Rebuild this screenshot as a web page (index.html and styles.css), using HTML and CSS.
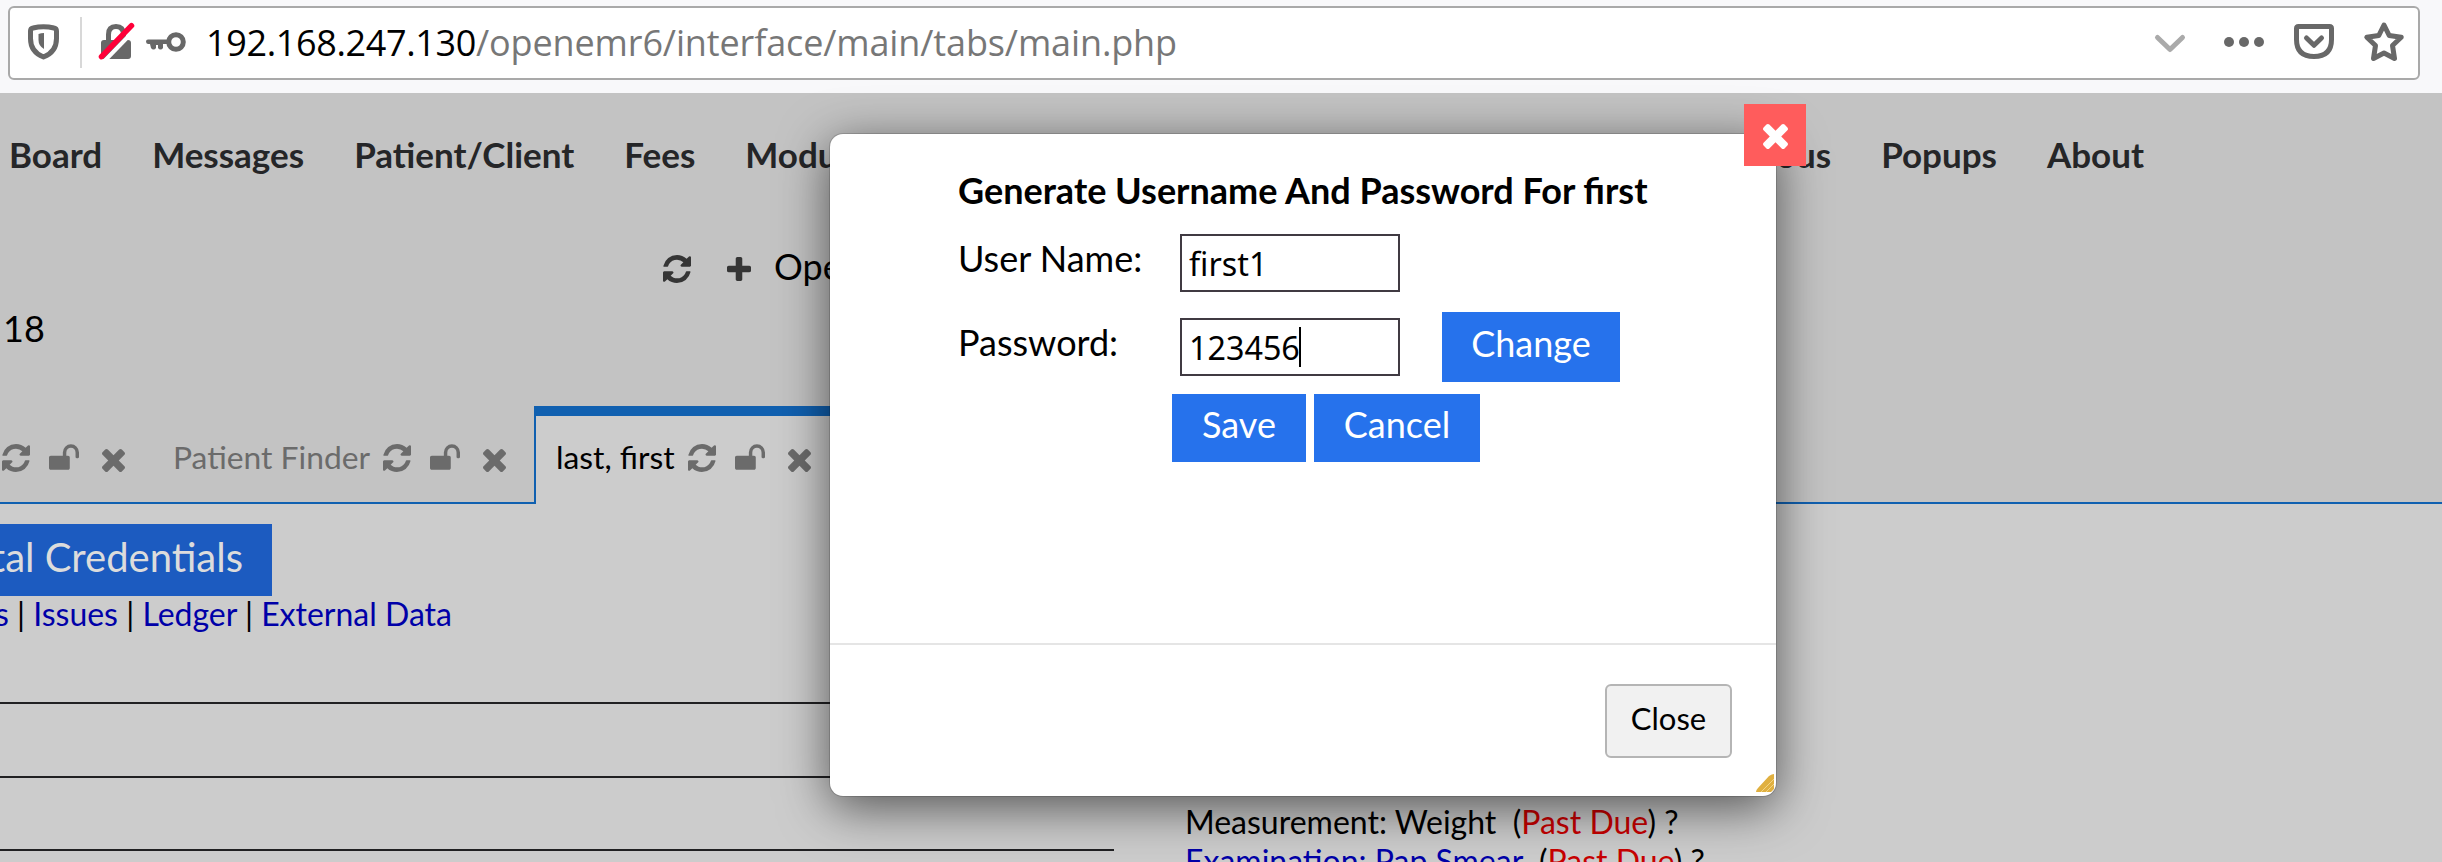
FILE: index.html
```
<!DOCTYPE html>
<html lang="en">
<head>
<meta charset="utf-8">
<title>OpenEMR</title>
<link rel="stylesheet" href="styles.css">
</head>
<body>
<svg class="defs" aria-hidden="true">
  <symbol id="refresh" viewBox="0 0 1536 1536"><path d="M1511 928q0 5-1 7-64 268-268 434.500t-478 166.500q-146 0-282.500-55t-243.500-157l-129 129q-19 19-45 19t-45-19-19-45v-448q0-26 19-45t45-19h448q26 0 45 19t19 45-19 45l-137 137q71 66 161 102t187 36q134 0 250-65t186-179q11-17 53-117 8-23 30-23h192q13 0 22.500 9.500t9.500 22.500zm25-800v448q0 26-19 45t-45 19h-448q-26 0-45-19t-19-45 19-45l138-138q-148-137-349-137-134 0-250 65t-186 179q-11 17-53 117-8 23-30 23h-199q-13 0-22.500-9.500t-9.500-22.500v-7q65-268 270-434.500t480-166.500q146 0 284 55.500t245 156.500l130-129q19-19 45-19t45 19 19 45z"/></symbol>
  <symbol id="unlock" viewBox="64 128 1664 1408"><path d="M1728 576v256q0 26-19 45t-45 19h-64q-26 0-45-19t-19-45v-256q0-106-75-181t-181-75-181 75-75 181v192h96q40 0 68 28t28 68v576q0 40-28 68t-68 28h-960q-40 0-68-28t-28-68v-576q0-40 28-68t68-28h672v-192q0-185 131.500-316.500t316.500-131.500 316.500 131.500 131.500 316.500z"/></symbol>
  <symbol id="times" viewBox="302 366 1188 1188"><path d="M1490 1322q0 40-28 68l-136 136q-28 28-68 28t-68-28l-294-294-294 294q-28 28-68 28t-68-28l-136-136q-28-28-28-68t28-68l294-294-294-294q-28-28-28-68t28-68l136-136q28-28 68-28t68 28l294 294 294-294q28-28 68-28t68 28l136 136q28 28 28 68t-28 68l-294 294 294 294q28 28 28 68z"/></symbol>
  <symbol id="plus" viewBox="192 128 1408 1408"><path d="M1600 736v192q0 40-28 68t-68 28h-416v416q0 40-28 68t-68 28h-192q-40 0-68-28t-28-68v-416h-416q-40 0-68-28t-28-68v-192q0-40 28-68t68-28h416v-416q0-40 28-68t68-28h192q40 0 68 28t28 68v416h416q40 0 68 28t28 68z"/></symbol>
</svg>

<header class="toolbar">
  <div class="urlbar">
    <svg class="url-icons" viewBox="0 0 190 70">
      <path class="line" d="M23 20q10.500-2.500 21 0q2.500.5 2.500 3v7.500q0 13.500-13 18.500Q20.500 44 20.500 30.500V23q0-2.500 2.500-3z"/>
      <path class="fill" d="M34 25v16q-5.500-3-5.500-9v-6q2.500-1 5.500-1z"/>
      <path class="rule" d="M71 9v51"/>
      <path class="line" d="M98.500 33v-6.500q0-8 7.500-8t7.500 8V33"/>
      <path class="fill" d="M94 32h24q3 0 3 3v13q0 3-3 3H94q-3 0-3-3V35q0-3 3-3z"/>
      <path class="gap" d="M95 52.500l30-31"/>
      <path class="slash" d="M91.500 48.700l30-31"/>
      <circle class="line" cx="166" cy="34" r="7.300"/>
      <path class="fill" d="M138 31.500h21v4.500h-6v4q-1 1.500-2.500 1.500t-2.500-1.500v-3h-2v3q-1 1.500-2.500 1.500t-2.500-1.500l-1-4h-2q-2-.5-2-2.500t2-2z"/>
    </svg>
    <div class="url"><span class="host">192.168.247.130</span><span class="path">/openemr6/interface/main/tabs/main.php</span></div>
    <svg class="url-actions" viewBox="0 0 270 70">
      <path class="chev" d="M9.500 29.500l12.500 12 12.500-12"/>
      <circle class="fill" cx="81" cy="34" r="5"/><circle class="fill" cx="96" cy="34" r="5"/><circle class="fill" cx="111" cy="34" r="5"/>
      <path class="line" d="M150.500 18.500h31q2 0 2 2v11q0 17-17.500 17t-17.500-17v-11q0-2 2-2z"/>
      <path class="line" d="M158.500 30l7.500 7.300 7.500-7.300"/>
      <path class="line" d="M236 17l5.200 10.500 12 1.800-8.700 8.200 2 13-10.500-5.500-10.500 5.500 2-13-8.700-8.200 12-1.800z"/>
    </svg>
  </div>
</header>

<main class="app">
  <nav class="menu">
    <span>Board</span><span>Messages</span><span>Patient/Client</span><span>Fees</span><span>Modules</span>
    <span class="tail">Miscellaneous</span><span>Popups</span><span>About</span>
  </nav>
  <div class="patient-bar">
    <svg class="dark i-refresh"><use href="#refresh"/></svg>
    <svg class="dark i-plus"><use href="#plus"/></svg>
    <span>Open</span>
  </div>
  <div class="age">18</div>
  <div class="tabs">
    <div class="tab first">
      <svg class="i-refresh"><use href="#refresh"/></svg><svg class="i-lock"><use href="#unlock"/></svg><svg class="i-times"><use href="#times"/></svg>
    </div>
    <div class="tab finder"><span>Patient Finder</span>
      <svg class="i-refresh"><use href="#refresh"/></svg><svg class="i-lock"><use href="#unlock"/></svg><svg class="i-times"><use href="#times"/></svg>
    </div>
    <div class="tab active"><span>last, first</span>
      <svg class="i-refresh"><use href="#refresh"/></svg><svg class="i-lock"><use href="#unlock"/></svg><svg class="i-times"><use href="#times"/></svg>
    </div>
    <div class="tab-rest"></div>
  </div>
  <section class="content">
    <div class="cred"><span>tal Credentials</span></div>
    <div class="links"><span><a>s</a> | <a>Issues</a> | <a>Ledger</a> | <a>External Data</a></span></div>
    <div class="columns">
      <div class="cards"><div></div><div></div><div></div></div>
      <div class="reminders">
        <p>Measurement: Weight&nbsp; (<em>Past Due</em>) ?</p>
        <p><a>Examination: Pap Smear</a>&nbsp; (<em>Past Due</em>) ?</p>
      </div>
    </div>
  </section>
</main>

<div class="modal">
  <button class="modal-x"><svg><use href="#times"/></svg></button>
  <div class="modal-body">
    <h1>Generate Username And Password For first</h1>
    <div class="row"><label>User Name:</label><div class="field">first1</div></div>
    <div class="row"><label>Password:</label><div class="field">123456<i class="caret"></i></div><button class="btn change">Change</button></div>
    <div class="actions"><button class="btn save">Save</button><button class="btn cancel">Cancel</button></div>
  </div>
  <div class="modal-foot"><button class="close">Close</button></div>
  <svg class="grip" viewBox="0 0 18 18"><path d="M0 18q0-2 2-4L13 2q3-2 5-2v15l-3 3z"/><path class="grip-lines" d="M5 18L18 5M10 18l8-8"/></svg>
</div>
</body>
</html>
```
FILE: styles.css
```
* { box-sizing: border-box; }
body {
  margin: 0; width: 2442px; height: 862px; overflow: hidden; position: relative;
  font-family: Lato, "Liberation Sans", sans-serif; color: #000; background: #ccc;
}
button { font: inherit; border: 0; padding: 0; }
svg { display: block; flex: none; fill: currentColor; }
.defs { position: absolute; width: 0; height: 0; }

/* Browser toolbar */
.toolbar { height: 93px; background: #f8f8fa; padding: 6px 22px 0 8px; }
.urlbar {
  height: 74px; border: 2px solid #a9a9a9; border-radius: 6px; background: #fff;
  display: flex; align-items: center;
}
.url-icons { width: 190px; height: 70px; }
.url-actions { width: 270px; height: 70px; }
.line { fill: none; stroke: #686868; stroke-width: 5; stroke-linejoin: round; stroke-linecap: round; }
.fill { fill: #686868; }
.rule { stroke: #d8d8d8; stroke-width: 2; }
.gap { stroke: #fff; stroke-width: 4; }
.slash { stroke: #ff0039; stroke-width: 5.500; stroke-linecap: round; }
.chev { fill: none; stroke: #aaa; stroke-width: 5; stroke-linecap: round; stroke-linejoin: round; }
.url {
  flex: 1; font-family: "Open Sans", "Noto Sans", sans-serif; font-size: 36px;
  line-height: 66px; white-space: nowrap; padding-left: 6px;
}
.host { letter-spacing: -.36px; }
.path { color: #777; letter-spacing: -.13px; }

/* Application */
.app { height: 769px; background: #c3c3c3; display: flex; flex-direction: column; }
.menu {
  height: 126px; display: flex; gap: 50px; padding: 0 298px 0 9px;
  font-size: 35px; font-weight: 700; color: #252628; line-height: 122px;
}
.menu .tail { margin-left: auto; }
.patient-bar { height: 99px; display: flex; align-items: center; padding-left: 663px; font-size: 36px; line-height: 95px; }
.patient-bar span { margin-top: -4px; }
.dark { color: #353535; }
.i-refresh { width: 28px; height: 28px; }
.i-plus { width: 24px; height: 24px; margin: 0 23px 0 36px; }
.i-lock { width: 30px; height: 26px; margin-left: 19px; }
.i-times { width: 23px; height: 23px; margin-left: 23px; }
.age { font-size: 36px; line-height: 42px; height: 98px; padding-left: 3px; margin-top: -11px; margin-bottom: 1px; }
.tabs { height: 98px; display: flex; font-size: 31.800px; color: #6b6b6b; }
.tab { display: flex; align-items: center; border-bottom: 2px solid #1060b0; padding-top: 12px; }
.tab span { flex: none; white-space: nowrap; margin-top: -6px; }
.tab .i-refresh { margin-top: -4px; }
.tab .i-lock { margin-top: -6px; }
.tab.first { width: 173px; padding-left: 2px; }
.tab.finder { width: 361px; }
.tab.finder span { width: 210px; }
.tab.active { width: 318px; background: #ccc; border: 2px solid #1060b0; border-top-width: 10px; border-bottom: 0; padding: 0 0 0 20px; }
.tab.active span { color: #000; width: 132px; }
.tab-rest { flex: 1; border-bottom: 2px solid #1060b0; }

.content { flex: 1; background: #ccc; padding-top: 20px; display: flex; flex-direction: column; }
.cred { width: 272px; height: 72px; background: #1c5bc0; color: #dcdcdc; font-size: 40px; line-height: 67px; display: flex; justify-content: flex-end; padding-right: 29px; white-space: nowrap; }
.links { width: 452px; height: 40px; display: flex; justify-content: flex-end; font-size: 32px; line-height: 36px; white-space: nowrap; }
.links a, .reminders a { color: #0000a8; }
.columns { flex: 1; display: flex; height: 226px; }
.cards { width: 1114px; padding-top: 66px; display: flex; flex-direction: column; gap: 71px; }
.cards div { height: 2px; background: #202022; }
.cards div:nth-child(2) { margin-top: 1px; }
.reminders { padding: 166px 0 0 71px; font-size: 32px; line-height: 39px; white-space: nowrap; height: 226px; overflow: hidden; }
.reminders p { margin: 0; }
.reminders em { font-style: normal; color: #c80000; }

/* Dialog */
.modal {
  position: absolute; left: 830px; top: 134px; width: 946px; height: 662px;
  background: #fff; border-radius: 13px; display: flex; flex-direction: column;
  box-shadow: 0 0 0 1px rgba(0,0,0,.15), 0 11px 50px rgba(0,0,0,.6);
}
.modal-x {
  position: absolute; left: 914px; top: -30px; width: 62px; height: 62px;
  background: #ff5c5c; color: #fff; display: flex; align-items: center; justify-content: center;
}
.modal-x svg { width: 27px; height: 25px; margin-top: 2px; }
.modal-body { height: 511px; border-bottom: 2px solid #e5e5e5; padding: 36px 0 0 128px; }
h1 { margin: 0; font-size: 36px; font-weight: 700; line-height: 40px; height: 64px; white-space: nowrap; }
.row { display: flex; height: 84px; font-size: 36px; }
.row label { width: 222px; line-height: 52px; margin-top: -2px; }
.field {
  width: 220px; height: 58px; border: 2px solid #403a42; padding-left: 7px; display: flex; align-items: center;
  font: 32.300px/56px "Noto Sans", sans-serif; font-variant-ligatures: none;
}
.caret { width: 2px; height: 40px; background: #000; margin-left: -1px; }
.btn { background: #2672ec; color: #fff; font-size: 36px; line-height: 60px; padding-bottom: 8px; }
.change { width: 178px; height: 70px; margin: -6px 0 0 42px; }
.actions { display: flex; gap: 8px; margin: -8px 0 0 214px; }
.save { width: 134px; height: 68px; }
.cancel { width: 166px; height: 68px; }
.modal-foot { flex: 1; display: flex; justify-content: flex-end; padding: 39px 44px 0 0; }
.close { width: 127px; height: 74px; border: 2px solid #b5b5b5; border-radius: 6px; background: #f1f1f1; color: #000; font-size: 31px; line-height: 65px; padding-bottom: 5px; }
.grip { position: absolute; right: 2px; bottom: 4px; width: 18px; height: 18px; color: #e0b040; }
.grip-lines { stroke: #f3d583; stroke-width: 1; fill: none; }
```
